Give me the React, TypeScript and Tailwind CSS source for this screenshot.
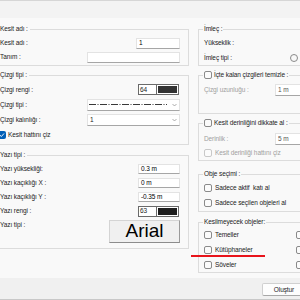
import React from "react";

function Check({ checked = false, disabled = false }: { checked?: boolean; disabled?: boolean }) {
  if (checked) {
    return (
      <span className="flex h-[8px] w-[8px] shrink-0 items-center justify-center rounded-[2px] bg-[#005fb8]">
        <svg width="6" height="6" viewBox="0 0 6 6">
          <path d="M1 3.2 L2.4 4.5 L5 1.5" fill="none" stroke="#fff" strokeWidth="0.9" />
        </svg>
      </span>
    );
  }
  return (
    <span
      className={
        disabled
          ? "h-[8px] w-[8px] shrink-0 rounded-[2px] border border-[#c8c8c8] bg-[#fbfbfb]"
          : "h-[8px] w-[8px] shrink-0 rounded-[2px] border border-[#8a8a8a] bg-[#fbfbfb]"
      }
    />
  );
}

function Input({ w, value = "", h = "h-[11px]", muted = false }: { w: string; value?: string; h?: string; muted?: boolean }) {
  return (
    <div
      className={`${w} ${h} flex shrink-0 items-center border border-[#e3e3e3] border-b-[#a6a6a6] bg-white pl-[2px] ${
        muted ? "text-[#555]" : "text-black"
      }`}
    >
      {value}
    </div>
  );
}

function Chevron() {
  return (
    <svg width="5" height="4" viewBox="0 0 5 4" className="mr-[2px] shrink-0">
      <path d="M0.5 1 L2.5 3 L4.5 1" fill="none" stroke="#8a8a8a" strokeWidth="0.7" />
    </svg>
  );
}

function Swatch({ value, color }: { value: string; color: string }) {
  return (
    <div className="flex h-[11px] w-[41px] border border-[#6a6a6a] bg-white">
      <div className="flex w-[18px] items-center border-r border-[#6a6a6a] pl-[1px]">{value}</div>
      <div className="flex-1 border border-white" style={{ backgroundColor: color }} />
    </div>
  );
}

const rightBox = "w-[140px] border border-r-0 border-[#dcdcdc] pl-[5px]";

export default function App() {
  return (
    <div className="relative h-[300px] w-[300px] overflow-hidden bg-[#f9f9f9] font-['Liberation_Sans',Arial,sans-serif] text-[6.5px] leading-[10px] tracking-[-0.1px] text-[#1b1b1b]">
      <div className="h-[18px] border-t border-[#d6d6d6] bg-[#f3f3f3]" />
      <div className="flex h-[260px] w-[400px]">
        {/* Left column */}
        <div className="ml-[-5px] mt-[6px] flex w-[194px] shrink-0 flex-col">
          <fieldset className="border border-[#dcdcdc] pb-[1px] pl-[4px] pr-[8px] pt-[2px]">
            <legend className="pr-[2px]">Kesit adı :</legend>
            <div className="flex h-[14px] items-center justify-between">
              <span>Kesit adı :</span>
              <Input w="w-[44px]" value="1" />
            </div>
            <div className="flex h-[14px] items-center justify-between">
              <span>Tanım :</span>
              <Input w="w-[93px]" />
            </div>
          </fieldset>

          <fieldset className="mt-[4px] border border-[#dcdcdc] pb-[1px] pl-[4px] pr-[8px] pt-[2px]">
            <legend className="pr-[2px]">Çizgi tipi :</legend>
            <div className="flex h-[15px] items-center justify-between">
              <span>Çizgi rengi :</span>
              <div className="mr-[1px]">
                <Swatch value="64" color="#333333" />
              </div>
            </div>
            <div className="flex h-[15px] items-center justify-between">
              <span>Çizgi tipi :</span>
              <div className="flex h-[12px] w-[93px] items-center justify-between border border-[#e3e3e3] border-b-[#a6a6a6] bg-white pl-[1px]">
                <svg width="78" height="3" viewBox="0 0 78 3">
                  <line x1="0" y1="1.5" x2="78" y2="1.5" stroke="#222" strokeWidth="0.9" strokeDasharray="7 1.5 1 1.5" />
                </svg>
                <Chevron />
              </div>
            </div>
            <div className="flex h-[15px] items-center justify-between">
              <span>Çizgi kalınlığı :</span>
              <div className="flex h-[12px] w-[93px] items-center justify-between border border-[#e3e3e3] border-b-[#a6a6a6] bg-white pl-[2px]">
                <span>1</span>
                <Chevron />
              </div>
            </div>
            <div className="ml-[-2px] flex h-[16px] items-center gap-[2px]">
              <Check checked />
              <span>Kesit hattını çiz</span>
            </div>
          </fieldset>

          <fieldset className="mt-[5px] border border-[#dcdcdc] pb-[5px] pl-[4px] pr-[8px] pt-[2px]">
            <legend className="pr-[2px]">Yazı tipi :</legend>
            <div className="flex h-[14px] items-center justify-between">
              <span>Yazı yüksekliği:</span>
              <Input w="w-[42px]" h="h-[10px]" value="0.3 m" />
            </div>
            <div className="flex h-[14px] items-center justify-between">
              <span>Yazı kaçıklığı X :</span>
              <Input w="w-[42px]" h="h-[10px]" value="0 m" />
            </div>
            <div className="flex h-[14px] items-center justify-between">
              <span>Yazı kaçıklığı Y :</span>
              <Input w="w-[42px]" h="h-[10px]" value="-0.35 m" />
            </div>
            <div className="flex h-[14px] items-center justify-between">
              <span>Yazı rengi :</span>
              <div className="mr-[1px]">
                <Swatch value="63" color="#1e1e1e" />
              </div>
            </div>
            <div className="mt-[2px] flex items-start justify-between">
              <span>Yazı tipi :</span>
              <div className="flex h-[23px] w-[71px] items-center justify-center border border-[#d4d4d4] border-b-[#8c8c8c] border-r-[#9a9a9a] bg-[#f0f0f0] pb-[1px] font-['Liberation_Sans',Arial,sans-serif] text-[19px] leading-[20px] tracking-normal text-black">
                Arial
              </div>
            </div>
          </fieldset>
        </div>

        {/* Right column */}
        <div className="ml-[9px] mt-[6px] flex w-[140px] shrink-0 flex-col">
          <fieldset className={`${rightBox} pt-[1px]`}>
            <legend className="ml-[-1px] px-[1px]">İmleç :</legend>
            <div className="flex h-[15px] items-center">
              <span>Yükseklik :</span>
            </div>
            <div className="flex h-[15px] items-center">
              <span className="w-[86px] shrink-0">İmleç tipi :</span>
              <span className="h-[8px] w-[8px] shrink-0 rounded-full border border-[#8a8a8a]" />
            </div>
          </fieldset>

          <fieldset className={`${rightBox} mt-[4px] pb-[16px] pt-[3px]`}>
            <legend className="ml-[-1px] px-[1px]">
              <span className="flex items-center gap-[2px]">
                <Check />
                <span>İçte kalan çizgileri temizle :</span>
              </span>
            </legend>
            <div className="flex h-[14px] items-center text-[#a0a0a0]">
              <span className="w-[71px] shrink-0">Çizgi uzunluğu :</span>
              <Input w="w-[60px]" h="h-[12px]" value="1 m" muted />
            </div>
          </fieldset>

          <fieldset className={`${rightBox} mt-[4px] pt-[4px]`}>
            <legend className="ml-[-1px] px-[1px]">
              <span className="flex items-center gap-[2px]">
                <Check />
                <span>Kesit derinliğini dikkate al :</span>
              </span>
            </legend>
            <div className="flex h-[14px] items-center text-[#a0a0a0]">
              <span className="w-[71px] shrink-0">Derinlik :</span>
              <Input w="w-[60px]" h="h-[12px]" value="5 m" muted />
            </div>
            <div className="flex h-[14px] items-center gap-[3px] text-[#a0a0a0]">
              <Check disabled />
              <span>Kesit derinliği hattını çiz</span>
            </div>
          </fieldset>

          <fieldset className={`${rightBox} mt-[8px] pb-[1px] pt-[1px]`}>
            <legend className="ml-[-1px] px-[1px]">Obje seçimi :</legend>
            <div className="flex h-[15px] items-center gap-[3px]">
              <Check />
              <span>Sadece aktif&nbsp; katı al</span>
            </div>
            <div className="flex h-[15px] items-center gap-[3px]">
              <Check />
              <span>Sadece seçilen objeleri al</span>
            </div>
          </fieldset>

          <fieldset className={`${rightBox} mt-[5px]`}>
            <legend className="ml-[-1px] px-[1px]">Kesilmeyecek objeler:</legend>
            <div className="grid grid-cols-[92px_1fr]">
              <div className="flex h-[15px] items-center gap-[3px]">
                <Check />
                <span>Temeller</span>
              </div>
              <div className="flex h-[15px] items-center">
                <Check />
              </div>
              <div className="flex h-[15px] items-center gap-[3px]">
                <Check />
                <span>Kütüphaneler</span>
              </div>
              <div className="flex h-[15px] items-center">
                <Check />
              </div>
              <div className="flex h-[15px] items-center gap-[3px]">
                <Check />
                <span>Söveler</span>
              </div>
              <div className="flex h-[15px] items-center">
                <Check />
              </div>
            </div>
          </fieldset>
        </div>
      </div>

      {/* Bottom bar */}
      <div className="flex h-[22px] border-b border-[#c8c8c8] bg-[#f0f0f0] pl-[262px] pt-[5px]">
        <div className="flex h-[13px] w-[44px] shrink-0 items-center justify-center rounded-[2px] border border-[#d0d0d0] border-b-[#a8a8a8] bg-[#fdfdfd]">
          Oluştur
        </div>
      </div>

      {/* Red annotation underline */}
      <div className="absolute left-[191px] top-[255px] h-[2px] w-[74px] bg-[#e8141b]" />
    </div>
  );
}
